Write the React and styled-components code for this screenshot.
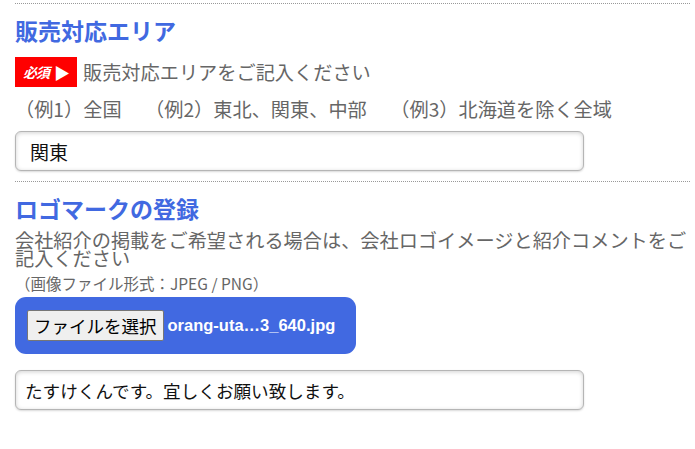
import styled, { createGlobalStyle } from "styled-components";

const Global = createGlobalStyle`
  body { margin:0; background:#fff; font-family:"Noto Sans CJK JP", "Noto Sans", sans-serif; color:#666; }
`;

const Page = styled.div`padding:3px 5px 0 15px;`;
const Section = styled.section`
  border-top:1px dotted #999; padding-bottom:10px;
`;
const Heading = styled.h2`
  margin:13px 0 0; font-size:23px; line-height:26px; font-weight:700; color:#4169e1;
`;
const ReqRow = styled.div`display:flex; align-items:center; gap:6px; margin-top:14px;`;
const Badge = styled.span`
  display:inline-flex; align-items:center; justify-content:center; gap:5px;
  width:62px; height:30px; background:#f00; color:#fff;
  font-size:14px; font-weight:700; font-style:italic; letter-spacing:-1px;
`;
const Tri = styled.span`font-style:normal; font-size:16px;`;
const Label = styled.span`font-size:19.2px; line-height:24px;`;
const Hint = styled.p`margin:10px 0 0; font-size:19.2px; line-height:24px; white-space:pre;`;
const Field = styled.div`
  width:569px; height:40px; box-sizing:border-box; margin-top:${p => p.$top}px;
  border:1px solid #b5b5b5; border-radius:6px; background:#fff;
  box-shadow:inset 0 1px 4px rgba(0,0,0,.18), 0 1px 2px rgba(0,0,0,.15);
  display:flex; align-items:center; padding-left:${p => p.$pad}px;
  font-size:${p => p.$size}px; color:#111;
`;
const Desc = styled.p`margin:10px 0 0; font-size:19.2px; line-height:18px;`;
const Note = styled.p`margin:8px 0 0; font-size:15.5px; line-height:17px;`;
const Upload = styled.div`
  display:flex; align-items:center; gap:4px; width:341px; height:57px; box-sizing:border-box;
  margin-top:5px; padding:0 12px; background:#4169e1; border-radius:11px;
`;
const PickBtn = styled.button`
  height:31px; padding:0 6px; background:#efefef; border:1px solid #767676; border-radius:2px;
  font-family:"Noto Sans CJK JP", sans-serif; font-size:17.5px; color:#000; line-height:1;
`;
const FileName = styled.span`
  color:#fff; font-family:"Liberation Sans", Arial, sans-serif; font-weight:700; font-size:16.5px;
`;

export default function App() {
  return (
    <Page>
      <Global />
      <Section>
        <Heading>販売対応エリア</Heading>
        <ReqRow>
          <Badge>必須<Tri>▶</Tri></Badge>
          <Label>販売対応エリアをご記入ください</Label>
        </ReqRow>
        <Hint>{"（例1）全国　 （例2）東北、関東、中部　 （例3）北海道を除く全域"}</Hint>
        <Field $top={10} $pad={14} $size={19}>関東</Field>
      </Section>
      <Section>
        <Heading>ロゴマークの登録</Heading>
        <Desc>会社紹介の掲載をご希望される場合は、会社ロゴイメージと紹介コメントをご記入ください</Desc>
        <Note>（画像ファイル形式：JPEG / PNG）</Note>
        <Upload>
          <PickBtn>ファイルを選択</PickBtn>
          <FileName>orang-uta…3_640.jpg</FileName>
        </Upload>
        <Field $top={16} $pad={9} $size={17.6}>たすけくんです。宜しくお願い致します。</Field>
      </Section>
    </Page>
  );
}
